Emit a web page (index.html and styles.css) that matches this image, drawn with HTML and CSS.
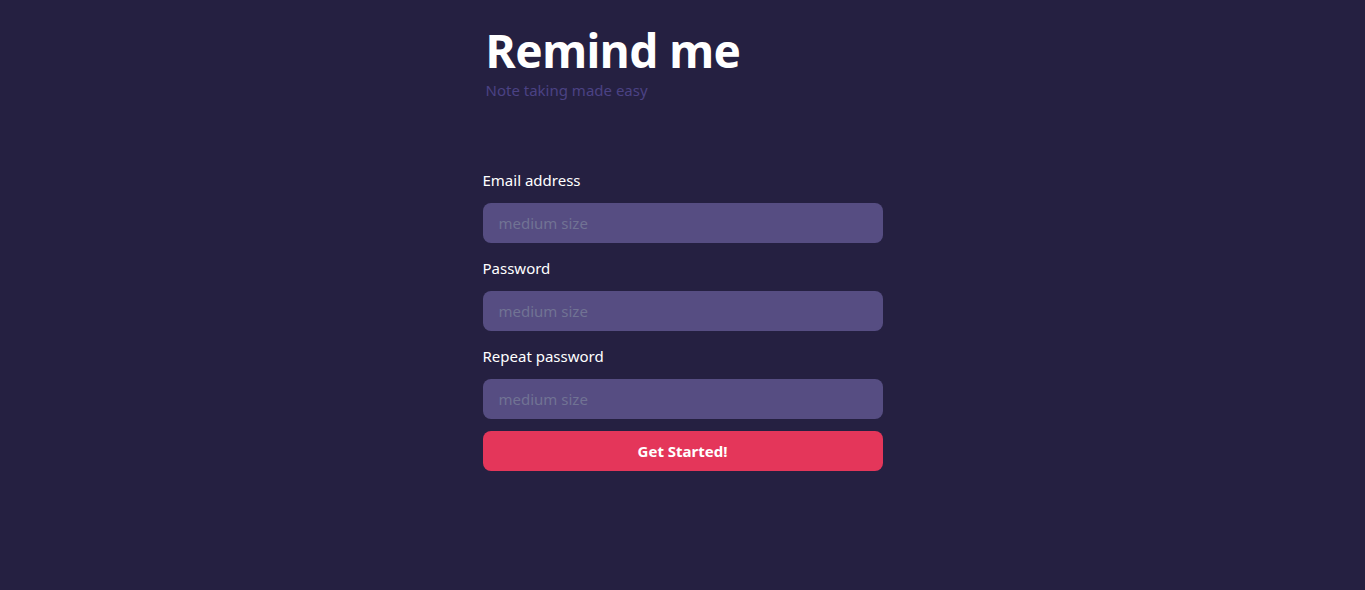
FILE: index.html
```html
<!DOCTYPE html>
<html lang="en">
<head>
<meta charset="utf-8">
<title>Remind me</title>
<link rel="stylesheet" href="styles.css">
</head>
<body>
<main class="page">
  <header class="brand">
    <h1 class="brand-title">Remind me</h1>
    <p class="brand-sub">Note taking made easy</p>
  </header>
  <form class="signup">
    <div class="field">
      <label class="field-label" for="email">Email address</label>
      <input class="field-input" id="email" type="email" placeholder="medium size">
    </div>
    <div class="field">
      <label class="field-label" for="pw">Password</label>
      <input class="field-input" id="pw" type="password" placeholder="medium size">
    </div>
    <div class="field">
      <label class="field-label" for="pw2">Repeat password</label>
      <input class="field-input" id="pw2" type="password" placeholder="medium size">
    </div>
    <button class="submit" type="button">Get Started!</button>
  </form>
</main>
</body>
</html>
```

FILE: styles.css
```css
html, body {
  margin: 0;
  padding: 0;
  background: #252041;
  font-family: "Noto Sans", "Open Sans", sans-serif;
  height: 100%;
}

.page {
  width: 400px;
  margin: 0 auto;
  display: flex;
  flex-direction: column;
}

.brand {
  padding: 22px 0 0 3px;
}

.brand-title {
  margin: 0;
  font-size: 46px;
  line-height: 56px;
  font-weight: 700;
  color: #ffffff;
  letter-spacing: -0.5px;
}

.brand-sub {
  margin: 1px 0 0;
  font-size: 15px;
  line-height: 22px;
  color: #4b4284;
}

.signup {
  display: flex;
  flex-direction: column;
  gap: 12px;
  margin-top: 67px;
}

.field {
  display: flex;
  flex-direction: column;
  gap: 11px;
  padding-bottom: 1px;
}

.field-label {
  font-size: 15px;
  line-height: 24px;
  color: #ffffff;
}

.field-input {
  box-sizing: border-box;
  height: 40px;
  width: 100%;
  border: none;
  border-radius: 8px;
  background: #564d82;
  padding: 0 16px;
  font-family: inherit;
  font-size: 15px;
  color: #ffffff;
  margin: 0;
  outline: none;
}

.field-input::placeholder {
  color: #717394;
}

.submit {
  height: 40px;
  width: 100%;
  border: none;
  border-radius: 8px;
  background: #e4365a;
  color: #ffffff;
  font-family: inherit;
  font-size: 15px;
  font-weight: 700;
  cursor: pointer;
  margin-top: -1px;
}
```
